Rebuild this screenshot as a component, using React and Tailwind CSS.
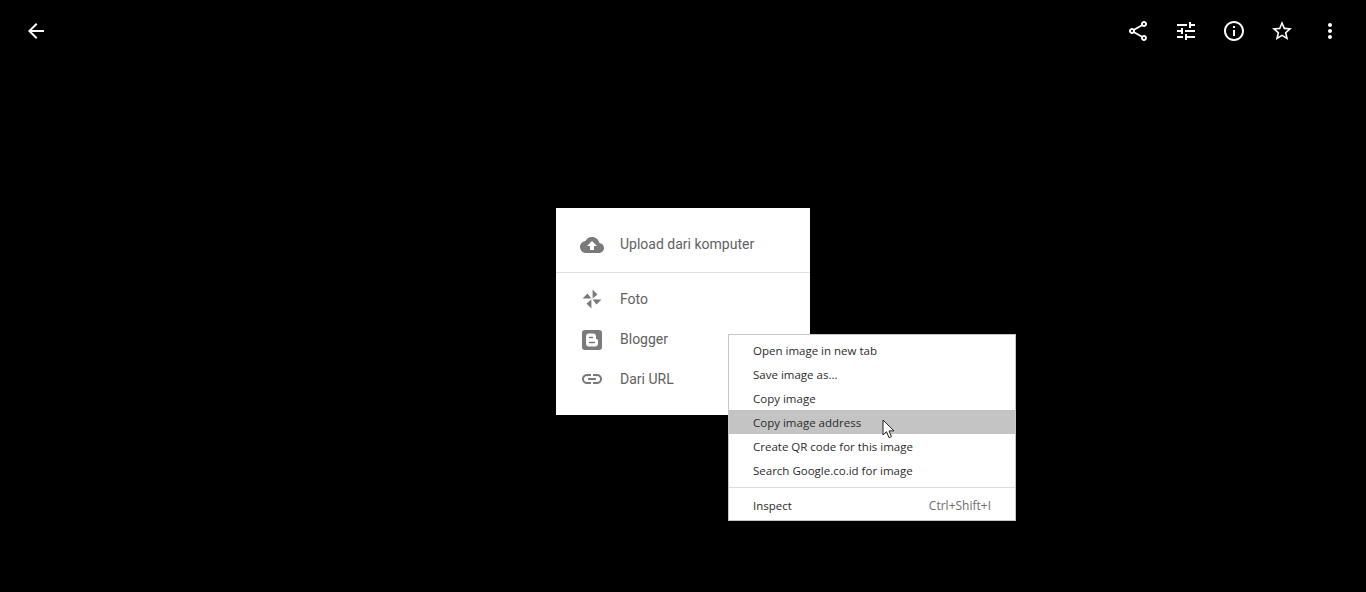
const headerIcons = [
  'M18 16.08c-.76 0-1.44.3-1.96.77L8.91 12.7c.05-.23.09-.46.09-.7s-.04-.47-.09-.7l7.05-4.11c.54.5 1.25.81 2.04.81 1.66 0 3-1.34 3-3s-1.34-3-3-3-3 1.34-3 3c0 .24.04.47.09.7L8.04 9.81C7.5 9.31 6.79 9 6 9c-1.66 0-3 1.34-3 3s1.34 3 3 3c.79 0 1.5-.31 2.04-.81l7.12 4.16c-.05.21-.08.43-.08.65 0 1.61 1.31 2.92 2.92 2.92 1.61 0 2.92-1.31 2.92-2.92s-1.31-2.92-2.92-2.92zM18 4c.55 0 1 .45 1 1s-.45 1-1 1-1-.45-1-1 .45-1 1-1zM6 13c-.55 0-1-.45-1-1s.45-1 1-1 1 .45 1 1-.45 1-1 1zm12 7.02c-.55 0-1-.45-1-1s.45-1 1-1 1 .45 1 1-.45 1-1 1z',
  'M3 17v2h6v-2H3zM3 5v2h10V5H3zm10 16v-2h8v-2h-8v-2h-2v6h2zM7 9v2H3v2h4v2h2V9H7zm14 4v-2H11v2h10zm-6-4h2V7h4V5h-4V3h-2v6z',
  'M11 7h2v2h-2zm0 4h2v6h-2zm1-9C6.48 2 2 6.48 2 12s4.48 10 10 10 10-4.48 10-10S17.52 2 12 2zm0 18c-4.41 0-8-3.59-8-8s3.59-8 8-8 8 3.59 8 8-3.59 8-8 8z',
  'M22 9.24l-7.19-.62L12 2 9.19 8.63 2 9.24l5.46 4.73L5.82 21 12 17.27 18.18 21l-1.63-7.03L22 9.24zM12 15.4l-3.76 2.27 1-4.28-3.32-2.88 4.38-.38L12 6.1l1.71 4.04 4.38.38-3.32 2.88 1 4.28L12 15.4z',
  'M12 8c1.1 0 2-.9 2-2s-.9-2-2-2-2 .9-2 2 .9 2 2 2zm0 2c-1.1 0-2 .9-2 2s.9 2 2 2 2-.9 2-2-.9-2-2-2zm0 6c-1.1 0-2 .9-2 2s.9 2 2 2 2-.9 2-2-.9-2-2-2z',
]

const uploadIcon = 'M19.35 11.04C18.67 7.59 15.64 5 12 5 9.11 5 6.6 6.64 5.35 9.04 2.34 9.36 0 11.91 0 15c0 3.31 2.69 6 6 6h13c2.76 0 5-2.24 5-5 0-2.64-2.05-4.78-4.65-4.96zM14 14v4h-4v-4H7l5-5 5 5h-3z'
// pinwheel: four triangular blades with a thin gap between them
const photosIcon = 'M12.600 11.400V2.500L17.500 7.500zM12.600 12.600H21.500L16.500 17.500zM11.400 12.600V21.500L6.500 16.500zM11.400 11.400H2.500L7.500 6.500z'
const bloggerIcon = 'M5 3h14a3 3 0 0 1 3 3v14a3 3 0 0 1-3 3H5a3 3 0 0 1-3-3V6a3 3 0 0 1 3-3zm4 3.500A3 3 0 0 0 6 9.500v7A3 3 0 0 0 9 19.500h6a3 3 0 0 0 3-3v-3a1.500 1.500 0 0 0-1.500-1.500H16V9.500a3 3 0 0 0-3-3H9zm.6 3.200h2.800a.8.8 0 0 1 0 1.600H9.600a.8.8 0 0 1 0-1.600zm0 5h4.800a.8.8 0 0 1 0 1.600H9.600a.8.8 0 0 1 0-1.600z'
const linkIcon = 'M3.9 12c0-1.71 1.39-3.1 3.1-3.1h4V7H7c-2.76 0-5 2.24-5 5s2.24 5 5 5h4v-1.9H7c-1.71 0-3.1-1.39-3.1-3.1zM8 13h8v-2H8v2zm9-6h-4v1.900h4c1.71 0 3.1 1.39 3.1 3.100s-1.39 3.100-3.100 3.100h-4V17h4c2.76 0 5-2.240 5-5s-2.240-5-5-5z'

const sources = [
  { label: 'Foto', icon: photosIcon },
  { label: 'Blogger', icon: bloggerIcon },
  { label: 'Dari URL', icon: linkIcon },
]

const menuItems = [
  'Open image in new tab',
  'Save image as...',
  'Copy image',
  'Copy image address',
  'Create QR code for this image',
  'Search Google.co.id for image',
]

function Icon({ d, className }) {
  return (
    <svg viewBox="0 0 24 24" className={className} fill="currentColor">
      <path d={d} />
    </svg>
  )
}

function SourceRow({ label, icon }) {
  return (
    <div className="flex h-10 items-center gap-4 px-6">
      <Icon d={icon} className="h-6 w-6 text-[#7a7a7a]" />
      <span>{label}</span>
    </div>
  )
}

function ContextMenu() {
  return (
    <div className="absolute left-[172px] top-[126px] w-[288px] border border-[#c6c6c6] bg-white pt-[3px] pb-[2px] font-['Open_Sans',sans-serif] text-[11.5px] text-[#2b2b2b]">
      {menuItems.map(item => (
        <div
          key={item}
          className={`flex h-6 items-center pl-6 pt-[2px] ${item === 'Copy image address' ? 'bg-[#c4c4c4]' : ''}`}
        >
          {item}
        </div>
      ))}
      <div className="mt-[5px] mb-[6px] h-px bg-[#dcdcdc]" />
      <div className="flex h-6 items-center justify-between pl-6 pr-6">
        <span>Inspect</span>
        <span className="text-[12px] text-[#6e6e6e]">Ctrl+Shift+I</span>
      </div>
      {/* mouse pointer */}
      <svg viewBox="0 0 14 20" className="absolute left-[153px] top-[84px] h-5 w-[14px]">
        <path
          d="M1 1v15l3.500-3.300 2.500 6 2.500-1-2.500-5.800H12z"
          fill="#fff"
          stroke="#222"
          strokeWidth="1"
        />
      </svg>
    </div>
  )
}

export default function App() {
  return (
    <div className="h-[592px] overflow-hidden bg-black font-['Roboto',sans-serif] text-white">
      {/* Top bar */}
      <header className="flex items-center justify-between px-3 py-[7px]">
        <button className="flex h-12 w-12 items-center justify-center">
          <Icon d="M20 11H7.83l5.590-5.590L12 4l-8 8 8 8 1.410-1.410L7.830 13H20v-2z" className="h-6 w-6" />
        </button>
        <div className="flex">
          {headerIcons.map(d => (
            <button key={d} className="flex h-12 w-12 items-center justify-center">
              <Icon d={d} className="h-6 w-6" />
            </button>
          ))}
        </div>
      </header>

      {/* Upload picker */}
      <div className="relative mx-auto mt-[146px] w-[254px] bg-white py-4 text-[14px] text-[#616161]">
        <SourceRow label="Upload dari komputer" icon={uploadIcon} />
        <div className="mt-2 mb-[6px] h-px bg-[#e0e0e0]" />
        {sources.map(s => <SourceRow key={s.label} {...s} />)}
        <ContextMenu />
      </div>
    </div>
  )
}
